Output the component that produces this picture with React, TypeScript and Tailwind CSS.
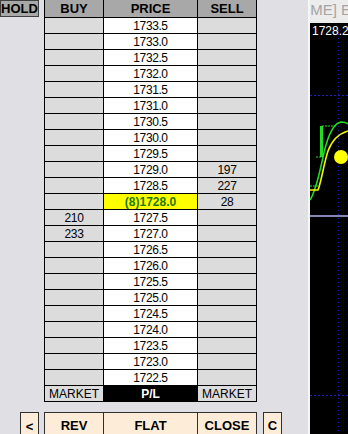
import React from "react";

const prices = Array.from({ length: 23 }, (_, i) => (1733.5 - i * 0.5).toFixed(1));
const sell: Record<string, string> = { "1729.0": "197", "1728.5": "227", "1728.0": "28" };
const buy: Record<string, string> = { "1727.5": "210", "1727.0": "233" };

function Chart() {
  return (
    <svg className="absolute inset-0" width="38" height="411" viewBox="0 0 38 411">
      <line x1="0" y1="72.5" x2="38" y2="72.5" stroke="#2020c0" strokeWidth="1" strokeDasharray="2 2" />
      <line x1="0" y1="372.5" x2="38" y2="372.5" stroke="#2020c0" strokeWidth="1" strokeDasharray="2 2" />
      <line x1="28.5" y1="7" x2="28.5" y2="411" stroke="#2020c0" strokeWidth="1" strokeDasharray="1 3" />
      <line x1="0" y1="193" x2="38" y2="193" stroke="#b0b4ec" strokeWidth="1.5" />
      <line x1="0" y1="163" x2="8" y2="163" stroke="#22dd22" strokeWidth="1" strokeDasharray="2 1" />
      <line x1="12" y1="103" x2="27" y2="103" stroke="#22dd22" strokeWidth="1" strokeDasharray="2 1" />
      <line x1="6" y1="134" x2="12" y2="134" stroke="#22dd22" strokeWidth="1" strokeDasharray="2 1" />
      <rect x="10" y="103" width="3" height="31" fill="#22dd22" />
      <path d="M0,177 C8,165 12,135 16,122 C20,108 25,100 31,99 C35,99 37,100 38,101" fill="none" stroke="#22dd22" strokeWidth="1.6" />
      <path d="M0,167 L8,167 C11,160 14,140 18,128 C22,117 28,111 38,108" fill="none" stroke="#f4f400" strokeWidth="1.6" />
      <circle cx="31" cy="134" r="7" fill="#ffff00" />
    </svg>
  );
}

export default function App() {
  return (
    <div className="w-[348px] h-[434px] overflow-hidden flex bg-[#e0dfe3] font-['Liberation_Sans',Arial,sans-serif] text-black">
      <div className="w-[308px] flex flex-col shrink-0">
        <div className="flex items-start">
          <div className="w-[39px] h-[17px] border border-[#404040] bg-[#a8a8a8] flex items-center justify-center text-[13px] font-bold leading-none">
            HOLD
          </div>
          <div className="ml-[5px] w-[213px] border-l border-black flex flex-col">
            <div className="flex h-[18px] text-[13px] font-bold">
              <div className="w-[59px] bg-[#a8a8a8] border-r border-b border-black flex items-center justify-center">BUY</div>
              <div className="w-[94px] bg-[#a8a8a8] border-r border-b border-black flex items-center justify-center">PRICE</div>
              <div className="w-[59px] bg-[#a8a8a8] border-r border-b border-black flex items-center justify-center">SELL</div>
            </div>
            {prices.map((p) => {
              const hl = p === "1728.0";
              return (
                <div key={p} className="flex h-[16px] text-[12px] tracking-[-0.4px]">
                  <div className="w-[59px] bg-[#dcdcdc] border-r border-b border-black flex items-center justify-center">{buy[p] ?? ""}</div>
                  {hl ? (
                    <div className="w-[94px] bg-[#ffff00] border-r border-b border-black flex items-center justify-center font-bold text-[#1e7a00] tracking-normal">
                      (8)1728.0
                    </div>
                  ) : (
                    <div className="w-[94px] bg-white border-r border-b border-black flex items-center justify-center">{p}</div>
                  )}
                  <div className="w-[59px] bg-[#dcdcdc] border-r border-b border-black flex items-center justify-center">{sell[p] ?? ""}</div>
                </div>
              );
            })}
            <div className="flex h-[16px] text-[12px]">
              <div className="w-[59px] bg-[#dcdcdc] border-r border-b border-black flex items-center justify-center">MARKET</div>
              <div className="w-[94px] bg-black text-white font-bold border-r border-b border-black flex items-center justify-center">P/L</div>
              <div className="w-[59px] bg-[#dcdcdc] border-r border-b border-black flex items-center justify-center">MARKET</div>
            </div>
          </div>
        </div>
        <div className="flex mt-[10px] h-[26px] text-[13px] font-bold">
          <div className="ml-[20px] w-[19px] bg-[#fcecd8] border border-[#303030] flex items-start pt-[4px] justify-center">&lt;</div>
          <div className="ml-[5px] flex border-l border-t border-[#303030]">
            <div className="w-[59px] bg-[#fcecd8] border-r border-[#303030] flex items-start pt-[3px] justify-center">REV</div>
            <div className="w-[94px] bg-[#fcecd8] border-r border-[#303030] flex items-start pt-[3px] justify-center">FLAT</div>
            <div className="w-[59px] bg-[#fcecd8] border-r border-[#303030] flex items-start pt-[3px] justify-center">CLOSE</div>
          </div>
          <div className="ml-[6px] w-[19px] bg-[#fcecd8] border border-[#303030] flex items-start pt-[3px] justify-center">C</div>
        </div>
      </div>
      <div className="w-[40px] flex flex-col border-l-2 border-[#f6f6f6]">
        <div className="h-[23px] bg-[#ececec] overflow-hidden whitespace-nowrap text-[15px] leading-[20px] text-[#a4a4a4] -indent-[4px]">
          [ME] E-mini
        </div>
        <div className="relative flex-1 bg-black overflow-hidden">
          <Chart />
          <div className="absolute left-[2px] top-[1px] text-[12px] leading-[14px] text-white whitespace-nowrap">1728.25</div>
        </div>
      </div>
    </div>
  );
}
